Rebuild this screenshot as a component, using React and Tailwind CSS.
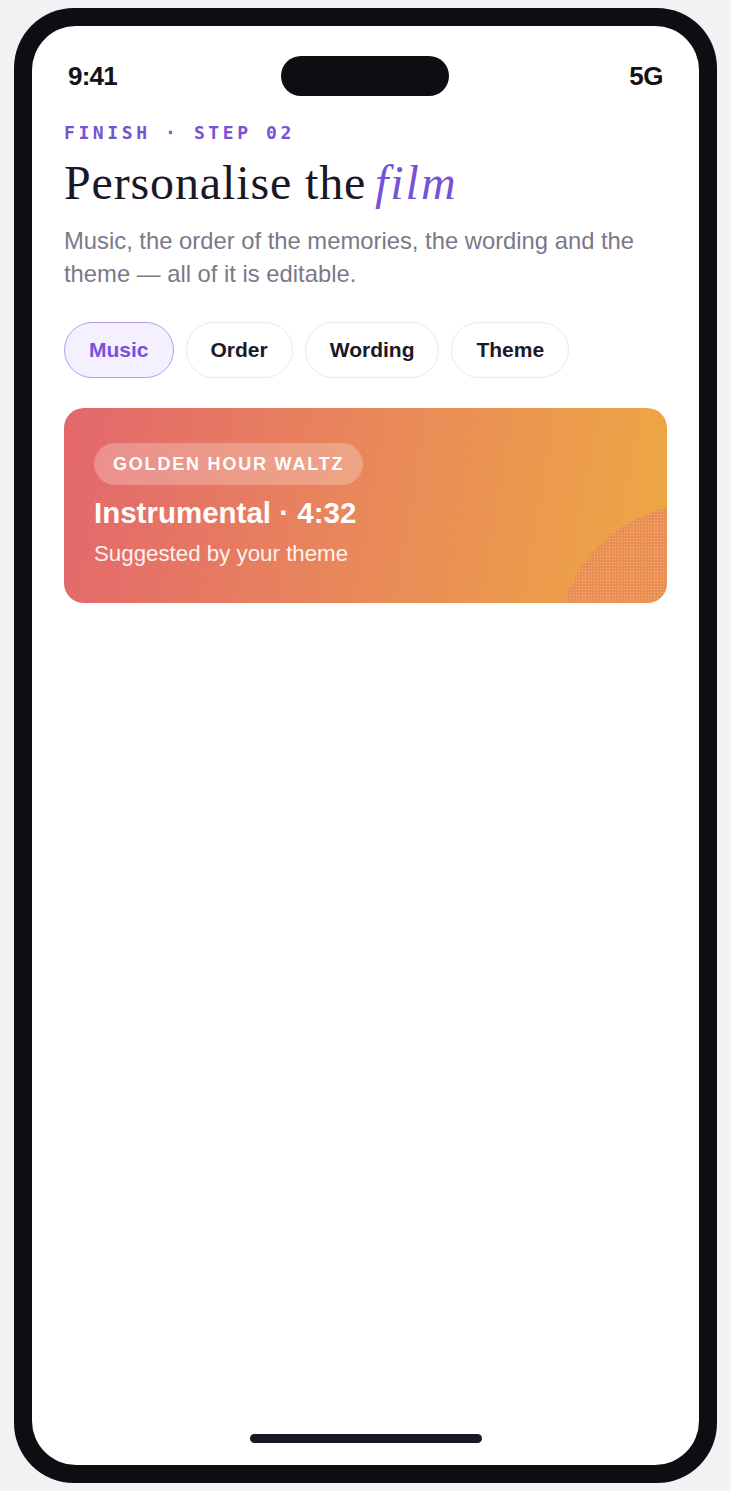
import React, { useState } from "react";

const tabs = ["Music", "Order", "Wording", "Theme"];

const StatusBar = () => (
  <div className="grid grid-cols-3 items-center px-9 pt-[30px]">
    <span className="justify-self-start text-[26px] font-bold tracking-[-0.03em] text-[#141219] font-['Liberation_Sans',sans-serif]">
      9:41
    </span>
    <div className="justify-self-center h-10 w-[168px] rounded-full bg-[#0e0d12]" />
    <span className="justify-self-end text-[26px] font-bold tracking-[-0.02em] text-[#141219] font-['Liberation_Sans',sans-serif]">
      5G
    </span>
  </div>
);

const MusicCard = () => (
  <div className="relative mt-[30px] overflow-hidden rounded-[20px] bg-[linear-gradient(100deg,#e3666c_0%,#e8845b_45%,#eea842_100%)] px-[30px] pt-[35px] pb-[35px]">
    {/* faint diagonal grain */}
    <div className="pointer-events-none absolute inset-0 bg-[repeating-linear-gradient(118deg,rgba(255,255,255,0.035)_0px,rgba(255,255,255,0.035)_1px,transparent_1px,transparent_7px)]" />
    {/* dotted blob bottom right */}
    <div className="pointer-events-none absolute left-[493px] top-[96px] h-[286px] w-[286px] rounded-full bg-[#e98f55] bg-[radial-gradient(circle,rgba(255,214,140,0.55)_0.8px,transparent_1px)] bg-[length:3px_3px]" />
    <div className="relative">
      <span className="inline-flex h-[42px] items-center rounded-full bg-white/25 px-[19px] text-[18px] font-bold uppercase tracking-[0.1em] text-white font-['Liberation_Sans',sans-serif]">
        Golden Hour Waltz
      </span>
      <div className="mt-[10px] text-[29.5px] font-bold leading-[35px] text-white font-['Liberation_Sans',sans-serif]">
        Instrumental · 4:32
      </div>
      <div className="mt-[10px] text-[22.3px] leading-[28px] text-white/90 font-['Liberation_Sans',sans-serif]">
        Suggested by your theme
      </div>
    </div>
  </div>
);

export default function App() {
  const [active, setActive] = useState("Music");

  return (
    <div className="min-h-screen bg-[#f2f2f4] px-[14px] py-2">
      <div className="h-[1475px] rounded-[60px] bg-[#0e0d12] p-[18px]">
        <div className="flex h-full flex-col overflow-hidden rounded-[44px] bg-white">
          <StatusBar />

          <div className="px-8">
            <div className="mt-[27px] text-[18px] font-bold leading-5 tracking-[0.2em] text-[#7752d8] font-['DejaVu_Sans_Mono',monospace]">
              FINISH · STEP 02
            </div>
            <h1 className="mt-3 text-[48px] leading-[55px] tracking-[0.018em] text-[#1b1726] font-['Liberation_Serif',serif]">
              Personalise the{" "}
              <em className="-ml-[4px] tracking-[0.04em] text-[#7752d8]">film</em>
            </h1>
            <p className="mt-[14px] text-[23.8px] leading-[33px] text-[#7b7889] font-['Liberation_Sans',sans-serif]">
              Music, the order of the memories, the wording and the theme — all of it is editable.
            </p>

            <div className="mt-[32px] flex gap-3">
              {tabs.map((t) => (
                <button
                  key={t}
                  onClick={() => setActive(t)}
                  className={
                    active === t
                      ? "h-14 rounded-full border border-[#b39cf0] bg-[#f4f0fe] px-6 text-[21px] font-bold text-[#7652d8] font-['Liberation_Sans',sans-serif]"
                      : "h-14 rounded-full border border-[#ebe8f0] bg-white px-6 text-[21px] font-bold text-[#1c1826] font-['Liberation_Sans',sans-serif]"
                  }
                >
                  {t}
                </button>
              ))}
            </div>

            <MusicCard />
          </div>

          <div className="flex-1" />
          <div className="mx-auto mb-[22px] h-[9px] w-[232px] rounded-full bg-[#1a1724]" />
        </div>
      </div>
    </div>
  );
}
